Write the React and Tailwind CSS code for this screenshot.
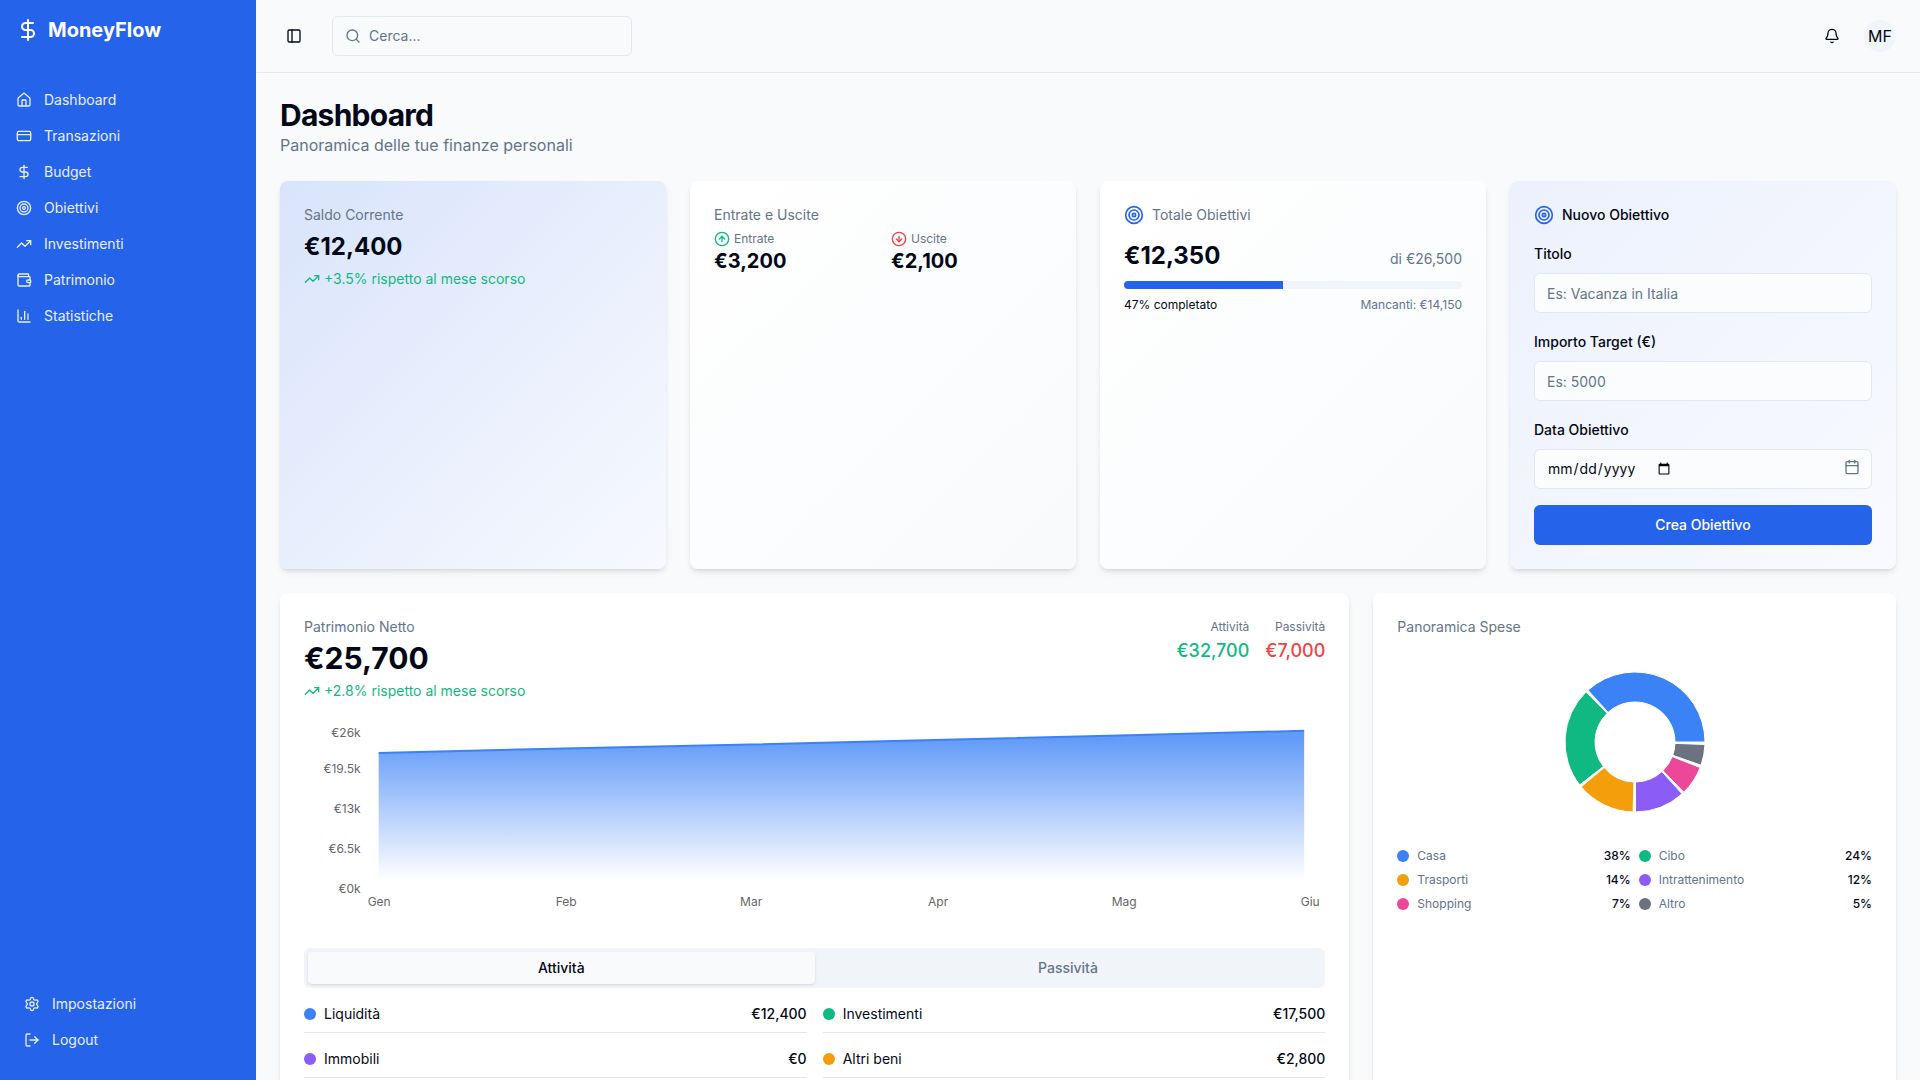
import React from "react";
import {
  Bell,
  Calendar,
  ChartColumn,
  CircleArrowDown,
  CircleArrowUp,
  CreditCard,
  DollarSign,
  House,
  LogOut,
  PanelLeft,
  Search,
  Settings,
  Target,
  TrendingUp,
  Wallet,
} from "lucide-react";

const navItems = [
  { label: "Dashboard", icon: House },
  { label: "Transazioni", icon: CreditCard },
  { label: "Budget", icon: DollarSign },
  { label: "Obiettivi", icon: Target },
  { label: "Investimenti", icon: TrendingUp },
  { label: "Patrimonio", icon: Wallet },
  { label: "Statistiche", icon: ChartColumn },
];

const assets = [
  { label: "Liquidità", value: "€12,400", dot: "bg-[#3b82f6]" },
  { label: "Investimenti", value: "€17,500", dot: "bg-[#10b981]" },
  { label: "Immobili", value: "€0", dot: "bg-[#8b5cf6]" },
  { label: "Altri beni", value: "€2,800", dot: "bg-[#f59e0b]" },
];

const expenses = [
  { label: "Casa", pct: 38, color: "#3b82f6", dot: "bg-[#3b82f6]" },
  { label: "Cibo", pct: 24, color: "#10b981", dot: "bg-[#10b981]" },
  { label: "Trasporti", pct: 14, color: "#f59e0b", dot: "bg-[#f59e0b]" },
  { label: "Intrattenimento", pct: 12, color: "#8b5cf6", dot: "bg-[#8b5cf6]" },
  { label: "Shopping", pct: 7, color: "#ec4899", dot: "bg-[#ec4899]" },
  { label: "Altro", pct: 5, color: "#6b7280", dot: "bg-[#6b7280]" },
];

// donut slice, angles in degrees going counter-clockwise from 3 o'clock
const slicePath = (cx, cy, inner, outer, start, end) => {
  const pt = (r, a) => {
    const rad = (a * Math.PI) / 180;
    return `${(cx + r * Math.cos(rad)).toFixed(2)} ${(cy - r * Math.sin(rad)).toFixed(2)}`;
  };
  const large = end - start > 180 ? 1 : 0;
  return `M${pt(outer, start)} A${outer} ${outer} 0 ${large} 0 ${pt(outer, end)} L${pt(inner, end)} A${inner} ${inner} 0 ${large} 1 ${pt(inner, start)} Z`;
};

const Sidebar = () => (
  <aside className="w-64 shrink-0 h-full bg-[#2563eb] flex flex-col">
    <div className="h-[60px] flex items-center gap-2 px-4 text-white">
      <DollarSign size={24} />
      <span className="text-xl font-bold">MoneyFlow</span>
    </div>
    <nav className="pt-[22px] flex flex-col">
      {navItems.map((item) => (
        <a key={item.label} className="h-9 flex items-center gap-3 px-4 text-sm text-[#e9effd]">
          <item.icon size={16} />
          <span>{item.label}</span>
        </a>
      ))}
    </nav>
    <div className="mt-auto pb-[22px] flex flex-col">
      <a className="h-9 flex items-center gap-3 px-6 text-sm text-[#e9effd]">
        <Settings size={16} />
        <span>Impostazioni</span>
      </a>
      <a className="h-9 flex items-center gap-3 px-6 text-sm text-[#e9effd]">
        <LogOut size={16} />
        <span>Logout</span>
      </a>
    </div>
  </aside>
);

const Topbar = () => (
  <header className="h-[73px] shrink-0 flex items-center border-b border-[#e2e8f0] bg-[#f8fafc] pl-[30px] pr-6">
    <PanelLeft size={16} className="text-[#020817]" />
    <div className="ml-[30px] w-[300px] h-10 flex items-center gap-2 rounded-md border border-[#e2e8f0] px-3">
      <Search size={16} className="text-[#64748b]" />
      <span className="text-sm text-[#64748b]">Cerca...</span>
    </div>
    <Bell size={16} className="ml-auto text-[#020817]" />
    <div className="ml-6 w-8 h-8 rounded-full bg-[#f1f5f9] flex items-center justify-center text-base text-[#020817]">
      MF
    </div>
  </header>
);

const Trend = ({ text, className }) => (
  <div className={`flex items-center gap-1 text-sm text-[#10b981] ${className}`}>
    <TrendingUp size={16} />
    <span>{text}</span>
  </div>
);

const Field = ({ label, placeholder }) => (
  <div>
    <label className="block h-5 mb-[9px] text-sm font-medium text-[#020817]">{label}</label>
    <input
      placeholder={placeholder}
      className="flex w-full h-10 rounded-md border border-[#e2e8f0] bg-[#fbfcfe] px-3 text-sm text-[#020817] placeholder:text-[#64748b]"
    />
  </div>
);

const TopCards = () => (
  <div className="grid grid-cols-4 gap-6 mt-6">
    <div className="rounded-lg shadow-md p-6 bg-gradient-to-br from-[#d9e4fb] to-[#f7f9fe]">
      <div className="text-sm text-[#64748b]">Saldo Corrente</div>
      <div className="mt-[6px] text-2xl font-bold text-[#020817]">€12,400</div>
      <Trend text="+3.5% rispetto al mese scorso" className="mt-[6px]" />
    </div>

    <div className="rounded-lg shadow-md p-6 bg-gradient-to-br from-white to-[#f8fafc]">
      <div className="text-sm text-[#64748b]">Entrate e Uscite</div>
      <div className="mt-[6px] grid grid-cols-2 gap-4">
        <div>
          <div className="flex items-center gap-1 text-xs text-[#64748b]">
            <CircleArrowUp size={16} className="text-[#10b981]" />
            <span>Entrate</span>
          </div>
          <div className="text-xl font-bold text-[#020817]">€3,200</div>
        </div>
        <div>
          <div className="flex items-center gap-1 text-xs text-[#64748b]">
            <CircleArrowDown size={16} className="text-[#ef4444]" />
            <span>Uscite</span>
          </div>
          <div className="text-xl font-bold text-[#020817]">€2,100</div>
        </div>
      </div>
    </div>

    <div className="rounded-lg shadow-md p-6 bg-gradient-to-br from-white to-[#f8fafc]">
      <div className="flex items-center gap-2 text-sm text-[#64748b]">
        <Target size={20} className="text-[#2563eb]" />
        <span>Totale Obiettivi</span>
      </div>
      <div className="mt-[15px] flex items-baseline justify-between">
        <span className="text-2xl font-bold text-[#020817]">€12,350</span>
        <span className="text-sm text-[#64748b]">di €26,500</span>
      </div>
      <div className="mt-[9px] h-2 rounded-full bg-[#f1f5f9] overflow-hidden">
        <div className="h-full w-[47%] bg-[#2563eb]" />
      </div>
      <div className="mt-2 flex justify-between text-xs">
        <span className="text-[#020817]">47% completato</span>
        <span className="text-[#64748b]">Mancanti: €14,150</span>
      </div>
    </div>

    <div className="rounded-lg shadow-md p-6 bg-gradient-to-br from-[#edf1fd] to-[#f8fafe]">
      <div className="flex items-center gap-2 text-sm font-medium text-[#020817]">
        <Target size={20} className="text-[#2563eb]" />
        <span>Nuovo Obiettivo</span>
      </div>
      <div className="mt-[19px] flex flex-col gap-[19px]">
        <Field label="Titolo" placeholder="Es: Vacanza in Italia" />
        <Field label="Importo Target (€)" placeholder="Es: 5000" />
        <div>
          <label className="block h-5 mb-[9px] text-sm font-medium text-[#020817]">Data Obiettivo</label>
          <div className="relative">
            <input
              type="date"
              className="flex w-full h-10 rounded-md border border-[#e2e8f0] bg-[#fbfcfe] px-3 text-sm text-[#020817]"
            />
            <Calendar size={16} className="absolute right-3 top-[10px] text-[#64748b]" />
          </div>
        </div>
      </div>
      <button className="mt-4 w-full h-10 rounded-md bg-[#2563eb] text-sm font-medium text-white">
        Crea Obiettivo
      </button>
    </div>
  </div>
);

const NetWorthChart = () => {
  const top = [
    [74.5, 34],
    [260, 29.5],
    [445, 25.5],
    [630, 21],
    [815, 16.5],
    [1000, 11.8],
  ];
  const line = top.map((p) => p.join(",")).join(" ");
  const yLabels = [
    ["€26k", 14],
    ["€19.5k", 50],
    ["€13k", 90],
    ["€6.5k", 130],
    ["€0k", 170],
  ];
  const xLabels = [
    ["Gen", 75],
    ["Feb", 262],
    ["Mar", 447],
    ["Apr", 634],
    ["Mag", 820],
    ["Giu", 1006],
  ];
  return (
    <svg viewBox="0 0 1021 200" className="block w-full h-[200px] mt-[18px]">
      <defs>
        <linearGradient id="areaFill" x1="0" y1="0" x2="0" y2="1">
          <stop offset="5%" stopColor="#3b82f6" stopOpacity="0.8" />
          <stop offset="95%" stopColor="#3b82f6" stopOpacity="0" />
        </linearGradient>
      </defs>
      <polygon points={`${line} 1000,170 74.5,170`} fill="url(#areaFill)" />
      <polyline points={line} fill="none" stroke="#3b82f6" strokeWidth="2" />
      {yLabels.map(([t, y]) => (
        <text key={t} x="56.5" y={y + 4} textAnchor="end" fontSize="12" fill="#666">
          {t}
        </text>
      ))}
      {xLabels.map(([t, x]) => (
        <text key={t} x={x} y="187" textAnchor="middle" fontSize="12" fill="#666">
          {t}
        </text>
      ))}
    </svg>
  );
};

const NetWorthCard = () => (
  <div className="col-span-2 rounded-lg shadow-md bg-white p-6">
    <div className="flex justify-between">
      <div>
        <div className="text-sm text-[#64748b]">Patrimonio Netto</div>
        <div className="mt-[3px] text-3xl font-bold text-[#020817]">€25,700</div>
        <Trend text="+2.8% rispetto al mese scorso" className="mt-[5px]" />
      </div>
      <div className="flex gap-4 text-right">
        <div>
          <div className="text-xs text-[#64748b] mt-[2px]">Attività</div>
          <div className="mt-[2px] text-lg font-medium text-[#10b981]">€32,700</div>
        </div>
        <div>
          <div className="text-xs text-[#64748b] mt-[2px]">Passività</div>
          <div className="mt-[2px] text-lg font-medium text-[#ef4444]">€7,000</div>
        </div>
      </div>
    </div>
    <NetWorthChart />
    <div className="mt-[29px] h-10 grid grid-cols-2 rounded-md bg-[#f1f5f9] p-1 text-sm font-medium">
      <div className="rounded-sm bg-[#f8fafc] shadow-sm flex items-center justify-center text-[#020817]">Attività</div>
      <div className="flex items-center justify-center text-[#64748b]">Passività</div>
    </div>
    <div className="mt-4 grid grid-cols-2 gap-4">
      {assets.map((a) => (
        <div key={a.label} className="flex items-center justify-between border-b border-[#e2e8f0] pb-2 text-sm text-[#020817]">
          <div className="flex items-center gap-2">
            <span className={`w-3 h-3 rounded-full ${a.dot}`} />
            <span>{a.label}</span>
          </div>
          <span className="font-medium">{a.value}</span>
        </div>
      ))}
    </div>
  </div>
);

const ExpensesCard = () => {
  let angle = 0;
  const slices = expenses.map((e) => {
    const sweep = (e.pct / 100) * 348;
    const d = slicePath(100, 100, 40, 70, angle, angle + sweep);
    angle += sweep + 2;
    return { ...e, d };
  });
  return (
    <div className="rounded-lg shadow-md bg-white p-6">
      <div className="text-sm text-[#64748b]">Panoramica Spese</div>
      <div className="mt-[5px] flex justify-center">
        <svg viewBox="0 0 200 200" className="w-[200px] h-[200px]">
          {slices.map((s) => (
            <path key={s.label} d={s.d} fill={s.color} stroke="#fff" strokeWidth="1" />
          ))}
        </svg>
      </div>
      <div className="mt-[6px] grid grid-cols-2 gap-2 text-xs">
        {expenses.map((e) => (
          <div key={e.label} className="flex items-center justify-between">
            <div className="flex items-center gap-2">
              <span className={`w-3 h-3 rounded-full ${e.dot}`} />
              <span className="text-[#64748b]">{e.label}</span>
            </div>
            <span className="font-medium text-[#020817]">{e.pct}%</span>
          </div>
        ))}
      </div>
    </div>
  );
};

const App = () => {
  return (
    <div className="w-full h-screen flex overflow-hidden bg-[#f8fafc] font-[Inter,sans-serif]">
      <Sidebar />
      <div className="flex-1 min-w-0 flex flex-col">
        <Topbar />
        <main className="flex-1 overflow-hidden p-6">
          <h1 className="text-3xl font-bold tracking-tight text-[#020817]">Dashboard</h1>
          <p className="text-base text-[#64748b]">Panoramica delle tue finanze personali</p>
          <TopCards />
          <div className="grid grid-cols-3 gap-6 mt-6">
            <NetWorthCard />
            <ExpensesCard />
          </div>
        </main>
      </div>
    </div>
  );
};

export default App;
